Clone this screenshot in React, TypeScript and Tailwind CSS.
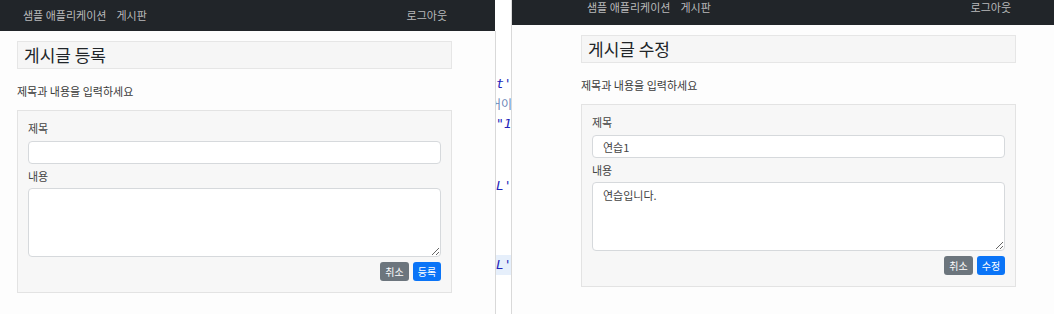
import React from "react";

const font = "font-['Noto_Sans_CJK_KR','Noto_Sans',sans-serif]";

interface PostFormProps {
  heading: string;
  submitLabel: string;
  titleValue?: string;
  bodyValue?: string;
  navHeight: string;
  navTextOffset: string;
  navGap: string;
  boxGap: string;
}

const PostForm: React.FC<PostFormProps> = ({
  heading,
  submitLabel,
  titleValue = "",
  bodyValue = "",
  navHeight,
  navTextOffset,
  navGap,
  boxGap,
}) => (
  <div className="flex flex-col bg-[#fdfdfd] h-full">
    {/* Navbar */}
    <div className={`${navHeight} shrink-0 bg-[#212529] flex ${navTextOffset}`}>
      <div className={`${navGap} w-[424px] flex justify-between text-[11px] text-[#b9babb] leading-none`}>
        <div className="flex gap-[10px]">
          <span>샘플 애플리케이션</span>
          <span>게시판</span>
        </div>
        <span>로그아웃</span>
      </div>
    </div>

    <div className={`w-[435px] ${boxGap}`}>
      {/* Page title */}
      <div className="mt-[10px] h-[28px] bg-[#f6f6f6] border border-[#e6e6e6] px-[6px] flex items-center text-[17px] text-[#212529]">
        {heading}
      </div>

      <p className="mt-[14px] text-[11px] leading-[16px] text-[#3a3a3a]">제목과 내용을 입력하세요</p>

      {/* Form card */}
      <div className="mt-[11px] bg-[#f7f7f7] border border-[#e3e3e3] px-[10px] pt-[9px] pb-[11px] flex flex-col">
        <label className="text-[11px] leading-[16px] text-[#444]">제목</label>
        <input
          readOnly
          value={titleValue}
          className="mt-[5px] h-[23px] bg-white border border-[#d6d9dc] rounded-[4px] px-[10px] text-[11px] text-[#444] outline-none"
        />
        <label className="mt-[4px] text-[11px] leading-[16px] text-[#444]">내용</label>
        <textarea
          readOnly
          value={bodyValue}
          className="mt-[4px] h-[69px] bg-white border border-[#d6d9dc] rounded-[4px] px-[10px] py-[4px] text-[11px] leading-[16px] text-[#444] outline-none"
        />
        <div className="mt-[5px] flex justify-end gap-[4px]">
          <button className="w-[29px] h-[19px] rounded-[3px] bg-[#6c757d] text-white text-[10px] leading-none">
            취소
          </button>
          <button className="w-[28px] h-[19px] rounded-[3px] bg-[#0a74f7] text-white text-[10px] leading-none">
            {submitLabel}
          </button>
        </div>
      </div>
    </div>
  </div>
);

export default function App() {
  return (
    <div className={`w-[1054px] h-[314px] overflow-hidden flex bg-[#fdfdfd] ${font}`}>
      {/* Left window: create */}
      <div className="w-[495px] shrink-0 h-full">
        <PostForm
          heading="게시글 등록"
          submitLabel="등록"
          navHeight="h-[31px]"
          navTextOffset="items-center"
          navGap="ml-[23px]"
          boxGap="ml-[17px]"
        />
      </div>

      {/* Editor strip in between */}
      <div className="w-[17px] shrink-0 h-full bg-white border-r border-[#d9d9d9] flex">
        <div className="w-px mt-[31px] bg-[#d9d9d9]" />
        <div className="flex-1 overflow-hidden flex flex-col font-['DejaVu_Sans_Mono',monospace] italic text-[13px] text-[#2323b8] whitespace-nowrap">
          <div className="h-[17px] mt-[75px] leading-[17px]">t'</div>
          <div className="h-[17px] mt-[3px] leading-[17px] not-italic text-[12px] text-[#6b86b8] -ml-[6px] font-['Noto_Sans_CJK_KR',sans-serif]">
            어이
          </div>
          <div className="h-[17px] mt-[3px] leading-[17px]">"1</div>
          <div className="h-[17px] mt-[45px] leading-[17px]">L'</div>
          <div className="h-[20px] mt-[61px] leading-[20px] bg-[#e6effb]">L'</div>
        </div>
      </div>

      {/* Right window: edit */}
      <div className="flex-1 h-full">
        <PostForm
          heading="게시글 수정"
          submitLabel="수정"
          titleValue="연습1"
          bodyValue="연습입니다."
          navHeight="h-[25px]"
          navTextOffset="items-start pt-[2px]"
          navGap="ml-[75px]"
          boxGap="ml-[69px]"
        />
      </div>
    </div>
  );
}
